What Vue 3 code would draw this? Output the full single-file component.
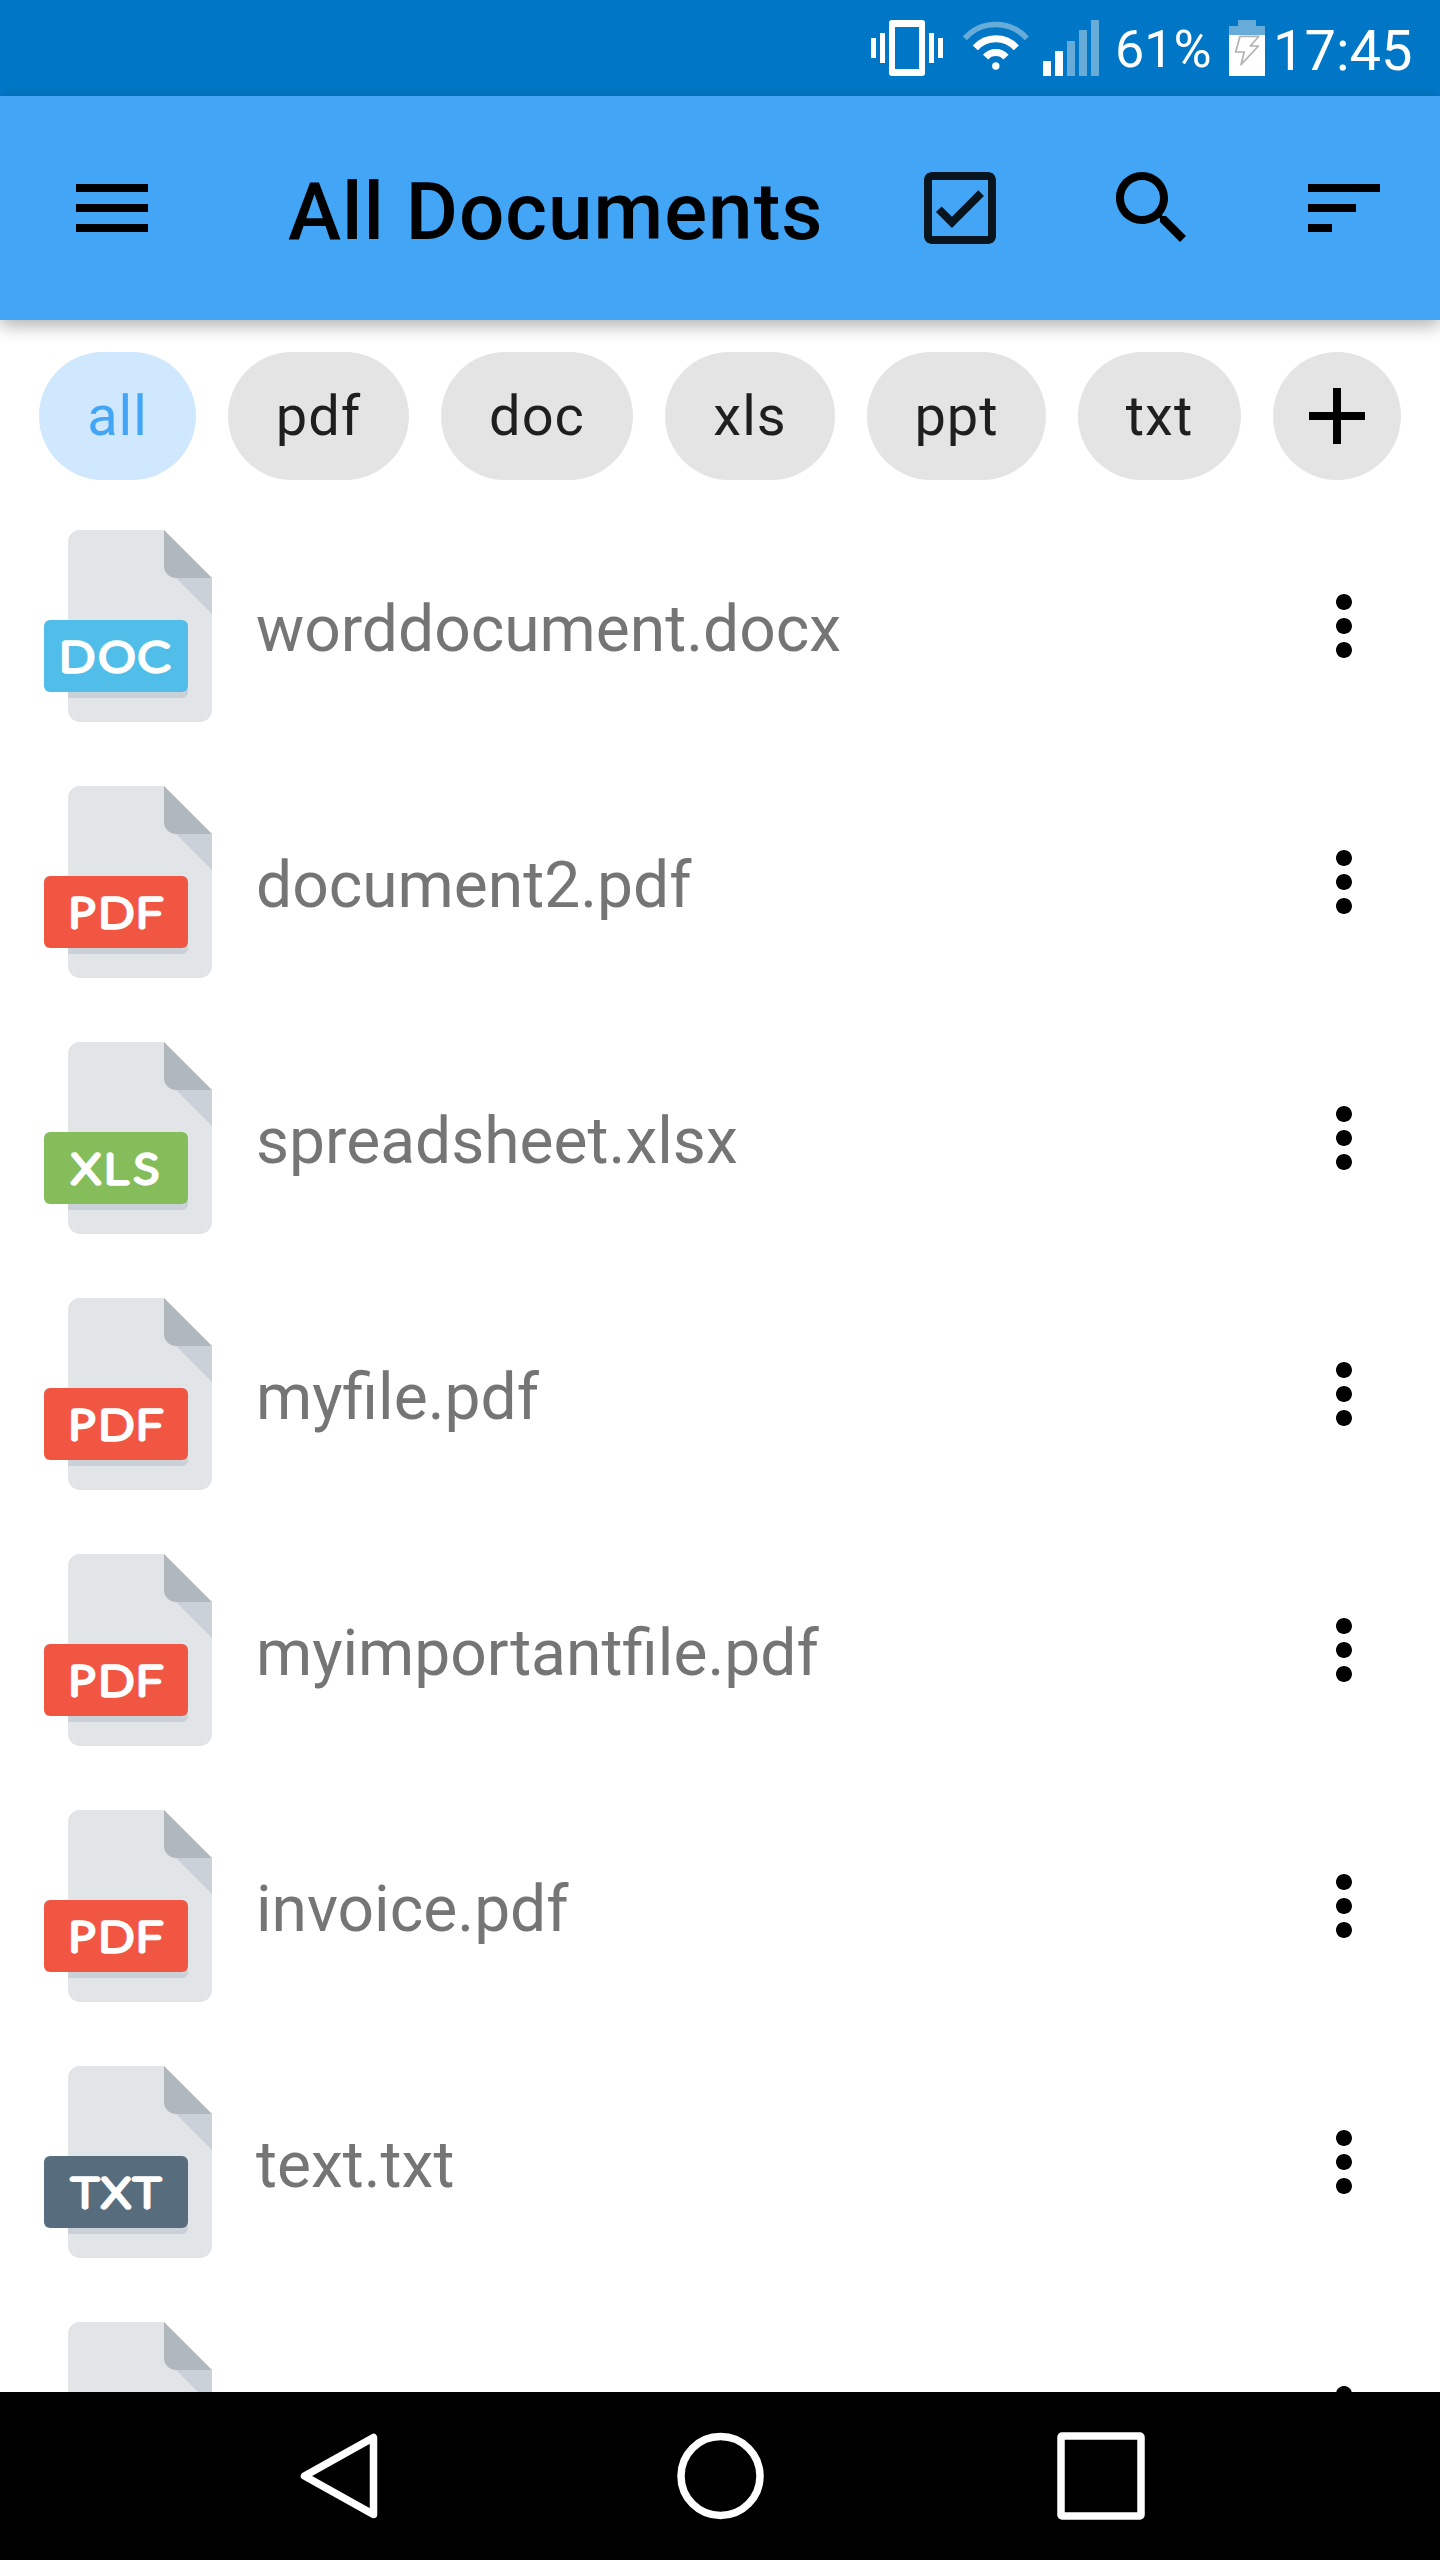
<script setup>
const filters = ['all', 'pdf', 'doc', 'xls', 'ppt', 'txt']
const activeFilter = 'all'

// badge letters are widened by this factor around their own anchors
const STRETCH = 1.17
const anchors = (...xs) => xs.map((x) => (x / STRETCH).toFixed(1)).join(' ')

const kinds = {
  doc: { label: 'DOC', color: '#50bee8', x: anchors(120.5, 226.5, 325) },
  pdf: { label: 'PDF', color: '#f15642', x: anchors(133, 225, 313) },
  xls: { label: 'XLS', color: '#84bd5a', x: anchors(144, 224, 305) },
  txt: { label: 'TXT', color: '#576d7e', x: anchors(141, 224, 306.5) },
  unknown: { label: '', color: '#f15642', x: '0' },
}

const files = [
  { name: 'worddocument.docx', kind: 'doc' },
  { name: 'document2.pdf', kind: 'pdf' },
  { name: 'spreadsheet.xlsx', kind: 'xls' },
  { name: 'myfile.pdf', kind: 'pdf' },
  { name: 'myimportantfile.pdf', kind: 'pdf' },
  { name: 'invoice.pdf', kind: 'pdf' },
  { name: 'text.txt', kind: 'txt' },
  { name: '', kind: 'unknown' },
]
</script>

<template>
  <div class="screen">
    <div class="status">
      <svg class="vibrate" width="72" height="56" viewBox="0 0 72 56" fill="#fff">
        <path d="M0 18h5v20H0zM9 13h5v30H9zM58 13h5v30h-5zM67 18h5v20h-5z" />
        <path fill-rule="evenodd" d="M21 0h30a3 3 0 0 1 3 3v50a3 3 0 0 1-3 3H21a3 3 0 0 1-3-3V3a3 3 0 0 1 3-3zM24 7v42h24V7z" />
      </svg>
      <svg class="wifi" width="68" height="56" viewBox="0 0 68 56" fill="none" stroke="#fff" stroke-width="7">
        <path d="M2.8 18.4A41.3 41.3 0 0 1 64.8 18.4" stroke="#67abd9" stroke-width="5.5" />
        <path d="M13.3 27.8A27.5 27.5 0 0 1 54.3 27.8" />
        <path d="M23.6 37.1A13.6 13.6 0 0 1 44 37.1" />
        <circle cx="33.8" cy="46" r="3.7" fill="#fff" stroke="none" />
      </svg>
      <svg class="signal" width="56" height="56" viewBox="0 0 56 56">
        <path fill="#fff" d="M0 41h8v15H0zM12 31h8v25h-8z" />
        <path fill="#67abd9" d="M24 21h8v35h-8zM36 10h8v46h-8zM48 0h8v56h-8z" />
      </svg>
      <span class="percent">61%</span>
      <svg class="battery" width="36" height="56" viewBox="0 0 36 56">
        <path fill="#67abd9" d="M9 0h18v6h9v9H0V6h9z" />
        <path fill="#fff" d="M0 15h36v41H0z" />
        <path d="M11 16.3H30L21.3 26h8.2L12 44.7 15.2 32H6.7z" fill="none" stroke="#b2b2b2" stroke-width="1.7" stroke-linejoin="round" />
      </svg>
      <span class="clock">17:45</span>
    </div>

    <header class="appbar">
      <svg class="icon" viewBox="0 0 24 24"><path d="M3 18h18v-2H3v2zm0-5h18v-2H3v2zm0-7v2h18V6H3z" /></svg>
      <h1>All Documents</h1>
      <div class="actions">
        <svg class="icon check" viewBox="0 0 24 24"><path d="M19 3H5c-1.1 0-2 .9-2 2v14c0 1.1.9 2 2 2h14c1.1 0 2-.9 2-2V5c0-1.1-.9-2-2-2zm0 16H5V5h14v14zM17.99 9l-1.41-1.42-6.59 6.59-2.58-2.57-1.42 1.41 4 3.99z" /></svg>
        <svg class="icon" viewBox="0 0 24 24"><path d="M15.5 14h-.79l-.28-.27C15.41 12.59 16 11.11 16 9.5 16 5.91 13.09 3 9.5 3S3 5.91 3 9.5 5.91 16 9.5 16c1.61 0 3.09-.59 4.23-1.57l.27.28v.79l5 4.99L20.49 19l-4.99-5zm-6 0C7.01 14 5 11.99 5 9.5S7.01 5 9.5 5 14 7.01 14 9.5 11.99 14 9.5 14z" /></svg>
        <svg class="icon" viewBox="0 0 24 24"><path d="M3 18h6v-2H3v2zM3 6v2h18V6H3zm0 7h12v-2H3v2z" /></svg>
      </div>
    </header>

    <nav class="chips">
      <span v-for="f in filters" :key="f" class="chip" :class="[f, { active: f === activeFilter }]">{{ f }}</span>
      <span class="chip add">
        <svg width="96" height="96" viewBox="0 0 24 24"><path d="M19 13h-6v6h-2v-6H5v-2h6V5h2v6h6v2z" /></svg>
      </span>
    </nav>

    <main class="list">
      <div v-for="(file, i) in files" :key="i" class="row">
        <svg class="file" viewBox="0 0 512 512">
          <path fill="#e2e5e7" d="M128 0c-17.6 0-32 14.4-32 32v448c0 17.6 14.4 32 32 32h320c17.6 0 32-14.4 32-32V128L352 0H128z" />
          <path fill="#b0b7bd" d="M384 128h96L352 0v96c0 17.6 14.4 32 32 32z" />
          <path fill="#cad1d8" d="M480 224l-96-96h96zM400 432H96v16h304c8.8 0 16-7.2 16-16v-16c0 8.8-7.2 16-16 16z" />
          <rect x="32" y="240" width="384" height="192" rx="16" :fill="kinds[file.kind].color" />
          <text
            v-if="kinds[file.kind].label"
            :x="kinds[file.kind].x"
            y="376"
            text-anchor="middle"
            :transform="`scale(${STRETCH} 1)`"
          >{{ kinds[file.kind].label }}</text>
        </svg>
        <span class="name">{{ file.name }}</span>
        <svg class="icon" viewBox="0 0 24 24"><path d="M12 8c1.1 0 2-.9 2-2s-.9-2-2-2-2 .9-2 2 .9 2 2 2zm0 2c-1.1 0-2 .9-2 2s.9 2 2 2 2-.9 2-2-.9-2-2-2zm0 6c-1.1 0-2 .9-2 2s.9 2 2 2 2-.9 2-2-.9-2-2-2z" /></svg>
      </div>
    </main>

    <footer class="navbar">
      <svg width="88" height="88" viewBox="0 0 88 88"><path d="M77.5 5.5v77L8.5 44z" /></svg>
      <svg width="88" height="88" viewBox="0 0 88 88"><circle cx="43.5" cy="44" r="39.5" /></svg>
      <svg width="88" height="88" viewBox="0 0 88 88"><rect x="4" y="4" width="80" height="80" rx="1" /></svg>
    </footer>
  </div>
</template>

<style>
body { margin: 0; }
</style>

<style scoped>
.screen {
  width: 1440px;
  height: 2560px;
  display: flex;
  flex-direction: column;
  overflow: hidden;
  background: #fff;
  font-family: Roboto, sans-serif;
}
svg { display: block; flex: none; }
.status {
  box-sizing: border-box;
  height: 96px;
  flex: none;
  display: flex;
  align-items: center;
  padding-left: 871px;
  background: #0077c6;
  color: #fff;
  white-space: nowrap;
}
.wifi { margin-left: 19px; }
.signal { margin-left: 13px; }
.percent { width: 114px; margin-left: 16px; font-size: 52px; line-height: 96px; padding-top: 4px; }
.clock { margin-left: 8px; font-size: 56px; line-height: 96px; padding-top: 5px; }
.appbar {
  box-sizing: border-box;
  height: 224px;
  flex: none;
  display: flex;
  align-items: center;
  padding: 0 48px 0 64px;
  background: #42a5f5;
  box-shadow: 0 6px 16px rgba(0, 0, 0, .3);
}
.icon { width: 96px; height: 96px; }
.check { opacity: .87; }
h1 { margin: 0 0 0 128px; flex: 1; font-size: 80px; font-weight: 500; line-height: 96px; letter-spacing: 1px; padding-top: 7px; color: #000; white-space: nowrap; }
.actions { display: flex; gap: 96px; }
.chips {
  box-sizing: border-box;
  height: 178px;
  flex: none;
  display: flex;
  gap: 32px;
  padding: 32px 39px 0;
}
.chip {
  height: 128px;
  display: flex;
  align-items: center;
  justify-content: center;
  border-radius: 64px;
  background: #e4e4e4;
  color: #1f1f1f;
  font-size: 56px;
  letter-spacing: 1px;
}
.active { background: #d0e8fd; color: #42a5f5; }
.all { width: 157px; }
.pdf { width: 181px; }
.doc { width: 192px; }
.xls { width: 170px; }
.ppt { width: 179px; }
.txt { width: 163px; }
.add { width: 128px; }
.list { flex: 1; min-height: 0; overflow: hidden; }
.row {
  box-sizing: border-box;
  height: 256px;
  display: flex;
  align-items: center;
  padding: 0 48px 0 32px;
}
.file { width: 192px; height: 192px; }
.file text {
  font-family: Lato, sans-serif;
  font-weight: 100;
  font-size: 104px;
  fill: #fff;
  stroke: #fff;
  stroke-width: 14px;
  stroke-linejoin: round;
  stroke-linecap: round;
}
.name { flex: 1; margin-left: 32px; font-size: 64.1px; line-height: 76px; padding-top: 7px; color: #757575; white-space: nowrap; }
.navbar {
  box-sizing: border-box;
  height: 168px;
  flex: none;
  display: flex;
  justify-content: space-between;
  align-items: center;
  padding: 0 295px 0 296px;
  background: #000;
}
.navbar svg { fill: none; stroke: #fff; stroke-width: 7.5; stroke-linejoin: round; }
</style>
